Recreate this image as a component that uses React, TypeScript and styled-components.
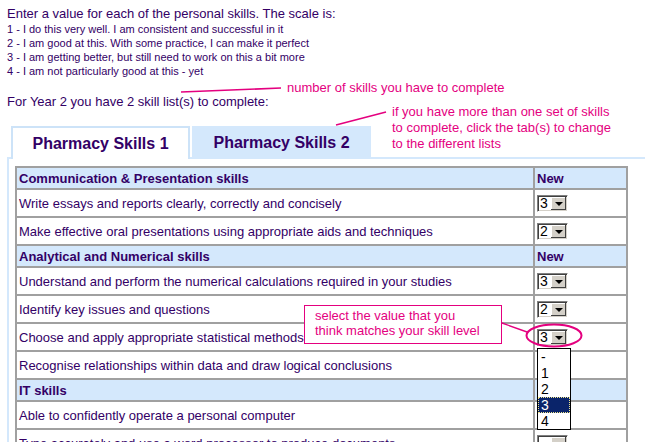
import React from "react";
import styled, { createGlobalStyle } from "styled-components";

const ink = "#330066";
const pink = "#e4007f";
const sky = "#d4e8fc";
const grid = "#a0a0a0";

const GlobalStyle = createGlobalStyle`
  html, body {
    margin: 0;
    padding: 0;
    background: #fff;
    overflow: hidden;
  }
  body {
    font-family: "Liberation Sans", Arial, sans-serif;
    color: ${ink};
  }
`;

// covered: the cell sits under the open drop-down list, so it is not painted
type Row =
  | { kind: "group"; title: string; covered?: boolean }
  | { kind: "skill"; text: string; value: string; covered?: boolean };

const rows: Row[] = [
  { kind: "group", title: "Communication & Presentation skills" },
  { kind: "skill", text: "Write essays and reports clearly, correctly and concisely", value: "3" },
  { kind: "skill", text: "Make effective oral presentations using appropriate aids and techniques", value: "2" },
  { kind: "group", title: "Analytical and Numerical skills" },
  { kind: "skill", text: "Understand and perform the numerical calculations required in your studies", value: "3" },
  { kind: "skill", text: "Identify key issues and questions", value: "2" },
  { kind: "skill", text: "Choose and apply appropriate statistical methods", value: "3" },
  { kind: "skill", text: "Recognise relationships within data and draw logical conclusions", value: "3", covered: true },
  { kind: "group", title: "IT skills", covered: true },
  { kind: "skill", text: "Able to confidently operate a personal computer", value: "3", covered: true },
  { kind: "skill", text: "Type accurately and use a word processor to produce documents", value: "" },
];

const options = ["-", "1", "2", "3", "4"];

export default function App() {
  return (
    <>
      <GlobalStyle />
      <Page>
        <Intro>Enter a value for each of the personal skills. The scale is:</Intro>
        <Scale>
          <div>1 - I do this very well. I am consistent and successful in it</div>
          <div>2 - I am good at this. With some practice, I can make it perfect</div>
          <div>3 - I am getting better, but still need to work on this a bit more</div>
          <div>4 - I am not particularly good at this - yet</div>
        </Scale>
        <YearLine>For Year 2 you have 2 skill list(s) to complete:</YearLine>

        <TabStrip>
          <Tab $active>Pharmacy Skills 1</Tab>
          <Tab>Pharmacy Skills 2</Tab>
        </TabStrip>

        <Panel>
          <SkillTable>
            <tbody>
              {rows.map((r, i) =>
                r.kind === "group" ? (
                  <tr key={i}>
                    <GroupCell>{r.title}</GroupCell>
                    <GroupCell $narrow>{r.covered ? null : "New"}</GroupCell>
                  </tr>
                ) : (
                  <tr key={i}>
                    <SkillCell>{r.text}</SkillCell>
                    <SkillCell $narrow>
                      {r.covered ? null : (
                        <Select>
                          <SelectValue>{r.value}</SelectValue>
                          <SelectButton>
                            <Arrow />
                          </SelectButton>
                        </Select>
                      )}
                    </SkillCell>
                  </tr>
                )
              )}
            </tbody>
          </SkillTable>
        </Panel>

        <Callouts width="645" height="442" viewBox="0 0 645 442">
          <line x1="181" y1="92" x2="281" y2="88" stroke={pink} strokeWidth="1.6" />
          <line x1="336" y1="125" x2="386" y2="112" stroke={pink} strokeWidth="1.6" />
          <line x1="502" y1="323" x2="527" y2="332" stroke={pink} strokeWidth="1.4" />
          <ellipse cx="554" cy="335.5" rx="27.5" ry="11" fill="none" stroke={pink} strokeWidth="2" />
        </Callouts>

        <Note $left={287} $top={80}>number of skills you have to complete</Note>
        <Note $left={392} $top={104}>
          if you have more than one set of skills
          <br />
          to complete, click the tab(s) to change
          <br />
          to the different lists
        </Note>

        <Bubble>
          select the value that you
          <br />
          think matches your skill level
        </Bubble>

        <DropList>
          {options.map((o) => (
            <DropItem key={o} $selected={o === "3"}>
              {o}
            </DropItem>
          ))}
        </DropList>
      </Page>
    </>
  );
}

const Page = styled.div`
  position: relative;
  width: 645px;
  height: 442px;
  overflow: hidden;
  box-sizing: border-box;
  padding: 6px 0 0 7px;
`;

const Intro = styled.p`
  margin: 0;
  font-size: 13px;
  line-height: 16px;
`;

const Scale = styled.div`
  font-size: 11px;
  line-height: 14px;
`;

const YearLine = styled.p`
  margin: 16px 0 0;
  font-size: 13px;
  line-height: 16px;
`;

const TabStrip = styled.div`
  position: relative;
  z-index: 1;
  display: flex;
  align-items: flex-start;
  gap: 2px;
  margin-top: 16px;
  padding-left: 4px;
  height: 31px;
`;

const Tab = styled.div<{ $active?: boolean }>`
  width: 179px;
  height: ${(p) => (p.$active ? 33 : 31)}px;
  box-sizing: border-box;
  display: flex;
  align-items: center;
  justify-content: center;
  border: 2px solid ${(p) => (p.$active ? "#cde3f8" : sky)};
  border-bottom: none;
  background: ${(p) => (p.$active ? "#fff" : sky)};
  font-size: 16px;
  font-weight: bold;
  color: ${ink};
`;

const Panel = styled.div`
  width: 700px;
  box-sizing: border-box;
  border-top: 2px solid ${sky};
  border-left: 2px solid ${sky};
  padding: 7px 0 0 6px;
`;

const SkillTable = styled.table`
  width: 613px;
  table-layout: fixed;
  border-collapse: separate;
  border-spacing: 0;
  border: 1px solid ${grid};
`;

const cellBase = `
  border: 1px solid ${grid};
  padding: 0 2px;
  text-align: left;
  vertical-align: middle;
  font-size: 13px;
  white-space: nowrap;
  overflow: hidden;
`;

const GroupCell = styled.td<{ $narrow?: boolean }>`
  ${cellBase}
  height: 20px;
  background: ${sky};
  font-weight: bold;
  width: ${(p) => (p.$narrow ? "87px" : "auto")};
`;

const SkillCell = styled.td<{ $narrow?: boolean }>`
  ${cellBase}
  height: 26px;
  background: #fff;
  width: ${(p) => (p.$narrow ? "87px" : "auto")};
`;

const Select = styled.div`
  display: flex;
  align-items: center;
  width: 31px;
  height: 17px;
  box-sizing: border-box;
  border: 1px solid;
  border-color: #808080 #fff #fff #808080;
  box-shadow: inset 1px 1px #404040, inset -1px -1px #d4d0c8;
  background: #fff;
`;

const SelectValue = styled.span`
  flex: 1;
  padding-left: 2px;
  font-size: 14px;
  line-height: 13px;
  color: #000;
`;

const SelectButton = styled.span`
  display: flex;
  align-items: center;
  justify-content: center;
  width: 15px;
  height: 13px;
  margin-right: 1px;
  background: #d4d0c8;
  box-shadow: inset -1px -1px #404040, inset 1px 1px #fff;
`;

const Arrow = styled.span`
  width: 0;
  height: 0;
  margin-top: 1px;
  border-left: 4px solid transparent;
  border-right: 4px solid transparent;
  border-top: 4px solid #000;
`;

const Callouts = styled.svg`
  position: absolute;
  left: 0;
  top: 0;
  z-index: 3;
  pointer-events: none;
`;

const Note = styled.div<{ $left: number; $top: number }>`
  position: absolute;
  left: ${(p) => p.$left}px;
  top: ${(p) => p.$top}px;
  z-index: 2;
  font-size: 13px;
  line-height: 16px;
  color: ${pink};
  white-space: nowrap;
`;

const Bubble = styled.div`
  position: absolute;
  left: 304px;
  top: 305px;
  z-index: 2;
  width: 198px;
  height: 39px;
  box-sizing: border-box;
  border: 1.5px solid ${pink};
  background: #fff;
  padding: 2px 0 0 10px;
  font-size: 13px;
  line-height: 15px;
  color: ${pink};
  white-space: nowrap;
`;

const DropList = styled.div`
  position: absolute;
  left: 537px;
  top: 348px;
  z-index: 2;
  width: 34px;
  box-sizing: border-box;
  border: 1px solid #000;
  background: #fff;
`;

const DropItem = styled.div<{ $selected?: boolean }>`
  height: 16px;
  box-sizing: border-box;
  padding-left: 2px;
  font-size: 14px;
  line-height: 15px;
  color: ${(p) => (p.$selected ? "#fff" : "#000")};
  background: ${(p) => (p.$selected ? "#0a246a" : "#fff")};
  border: 1px dotted ${(p) => (p.$selected ? "#f0e68c" : "transparent")};
`;
